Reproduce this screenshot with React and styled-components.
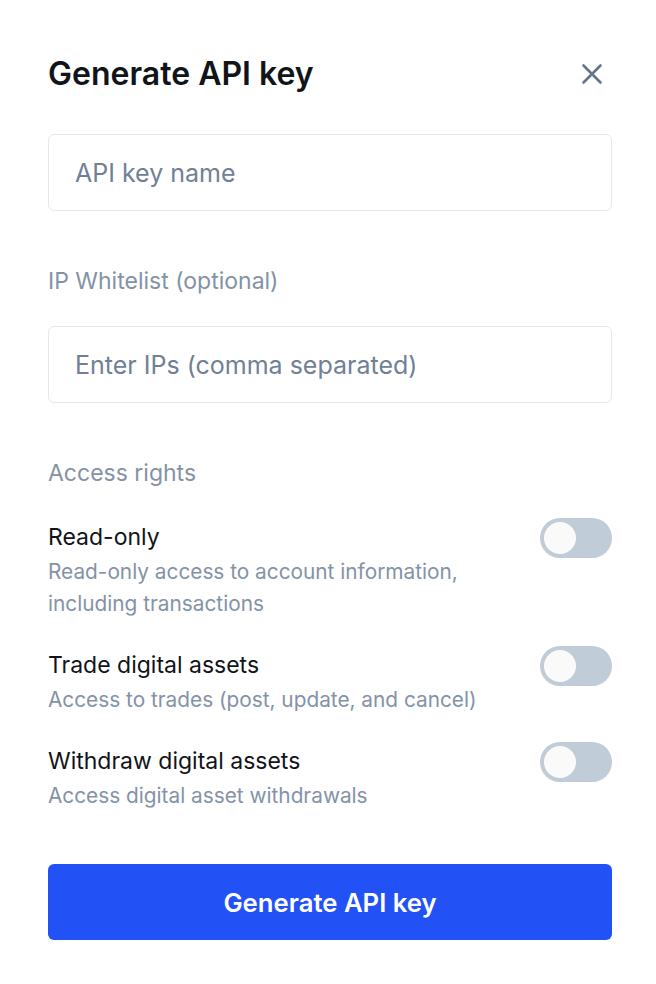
import React from 'react'
import styled, { createGlobalStyle } from 'styled-components'

const Global = createGlobalStyle`
  body {
    margin: 0;
    background: #fff;
    font-family: Inter, "Noto Sans", sans-serif;
  }
`

const rights = [
  { id: 'read', title: 'Read-only', desc: 'Read-only access to account information, including transactions' },
  { id: 'trade', title: 'Trade digital assets', desc: 'Access to trades (post, update, and cancel)' },
  { id: 'withdraw', title: 'Withdraw digital assets', desc: 'Access digital asset withdrawals' },
]

const CloseIcon = () => (
  <svg width="24" height="24" viewBox="0 0 24 24" fill="none" stroke="#64748b" strokeWidth="2.6" strokeLinecap="round">
    <path d="M3.5 3.5L20.5 20.5M20.5 3.5L3.5 20.5" />
  </svg>
)

const Toggle = ({ on = false }) => (
  <Track on={on}>
    <Knob on={on} />
  </Track>
)

export default function App() {
  return (
    <>
      <Global />
      <Modal>
        <Header>
          <Title>Generate API key</Title>
          <CloseButton aria-label="Close">
            <CloseIcon />
          </CloseButton>
        </Header>
        <Input placeholder="API key name" />
        <Label>IP Whitelist (optional)</Label>
        <Input placeholder="Enter IPs (comma separated)" />
        <Label>Access rights</Label>
        <RightsList>
          {rights.map((r) => (
            <RightRow key={r.id}>
              <RightText>
                <RightTitle>{r.title}</RightTitle>
                <RightDesc>{r.desc}</RightDesc>
              </RightText>
              <Toggle />
            </RightRow>
          ))}
        </RightsList>
        <SubmitButton>Generate API key</SubmitButton>
      </Modal>
    </>
  )
}

const Modal = styled.div`
  width: 564px;
  padding: 56px 44px 44px 48px;
  display: flex;
  flex-direction: column;
`

const Header = styled.div`
  display: flex;
  align-items: center;
  justify-content: space-between;
  margin-bottom: 42px;
`

const Title = styled.h1`
  margin: 0;
  font-size: 32px;
  line-height: 36px;
  font-weight: 600;
  color: #111418;
`

const CloseButton = styled.button`
  border: 0;
  background: none;
  padding: 0;
  width: 24px;
  height: 24px;
  margin-right: 8px;
  display: flex;
  cursor: pointer;
`

const Input = styled.input`
  box-sizing: border-box;
  width: 100%;
  height: 77px;
  border: 1px solid #e2e8f0;
  border-radius: 6px;
  padding: 0 26px;
  font-family: inherit;
  font-size: 25px;
  color: #111827;
  outline: none;
  &::placeholder {
    color: #718096;
  }
`

const Label = styled.div`
  margin: 55px 0 30px;
  font-size: 23px;
  line-height: 30px;
  color: #8492a6;
`

const RightsList = styled.div`
  display: flex;
  flex-direction: column;
  gap: 30px;
  margin-top: 4px;
`

const RightRow = styled.div`
  display: flex;
  justify-content: space-between;
  align-items: flex-start;
`

const RightText = styled.div`
  display: flex;
  flex-direction: column;
  gap: 4px;
  max-width: 440px;
`

const RightTitle = styled.div`
  font-size: 23px;
  line-height: 30px;
  color: #111418;
`

const RightDesc = styled.div`
  font-size: 20.8px;
  line-height: 32px;
  color: #8492a6;
`

const Track = styled.div`
  flex: none;
  width: 72px;
  height: 40px;
  border-radius: 20px;
  background: ${(p) => (p.on ? '#2251f5' : '#c0ccd8')};
  padding: 4px;
  box-sizing: border-box;
  margin-top: -4px;
  display: flex;
  justify-content: ${(p) => (p.on ? 'flex-end' : 'flex-start')};
`

const Knob = styled.div`
  width: 32px;
  height: 32px;
  border-radius: 50%;
  background: #fafafa;
`

const SubmitButton = styled.button`
  margin-top: 52px;
  height: 76px;
  width: 100%;
  border: 0;
  border-radius: 6px;
  background: #2251f5;
  color: #fff;
  font-family: inherit;
  font-size: 25.7px;
  font-weight: 600;
  cursor: pointer;
`
